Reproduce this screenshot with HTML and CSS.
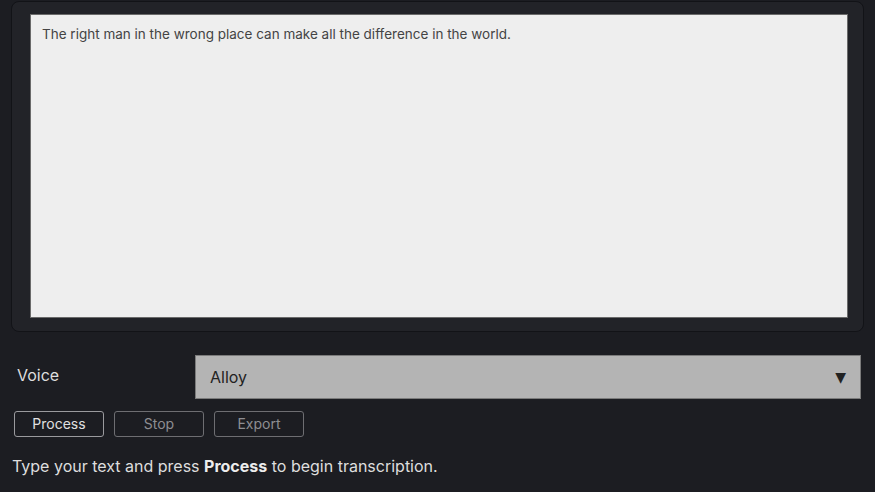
FILE: index.html
```html
<!DOCTYPE html>
<html>
<head>
<meta charset="utf-8">
<link rel="stylesheet" href="styles.css">
</head>
<body>
<div class="panel">
  <div class="textarea">The right man in the wrong place can make all the difference in the world.</div>
</div>
<div class="voice-row">
  <div class="voice-label">Voice</div>
  <div class="select"><span>Alloy</span><span class="arrow">▼</span></div>
</div>
<div class="buttons">
  <div class="btn primary">Process</div>
  <div class="btn">Stop</div>
  <div class="btn">Export</div>
</div>
<div class="status">Type your text and press <b>Process</b> to begin transcription.</div>
</body>
</html>
```
FILE: styles.css
```css
html, body {
  margin: 0;
  padding: 0;
  background: #1c1d22;
  font-family: Inter, "Noto Sans", sans-serif;
  width: 875px;
  height: 492px;
  overflow: hidden;
}
body {
  padding-top: 1px;
  box-sizing: border-box;
}
.panel {
  margin-left: 11px;
  width: 853px;
  height: 331px;
  box-sizing: border-box;
  border: 1px solid #121317;
  border-radius: 8px;
  background: #222328;
  padding: 12px 15px 13px 18px;
}
.textarea {
  height: 100%;
  box-sizing: border-box;
  background: #eeeeee;
  border: 1px solid #6a6a6a;
  color: #444;
  font-size: 13.5px;
  padding: 11px 11px;
  line-height: 16px;
}
.voice-row {
  display: flex;
  align-items: center;
  margin-top: 23px;
  height: 44px;
}
.voice-label {
  width: 178px;
  padding-left: 17px;
  color: #dedede;
  font-size: 16px;
  margin-top: -5px;
}
.select {
  width: 666px;
  height: 44px;
  box-sizing: border-box;
  background: #b4b4b4;
  border: 1px solid #7b7b7b;
  display: flex;
  align-items: center;
  justify-content: space-between;
  padding: 0 14px 0 14px;
  color: #222;
  font-size: 16px;
}
.arrow {
  font-size: 14px;
  color: #222;
  font-family: "DejaVu Sans", sans-serif;
}
.buttons {
  display: flex;
  gap: 10px;
  margin-top: 12px;
  margin-left: 14px;
}
.btn {
  width: 90px;
  height: 26px;
  box-sizing: border-box;
  border: 1px solid #6e6e72;
  border-radius: 3px;
  color: #8e8e92;
  font-size: 14px;
  display: flex;
  align-items: center;
  justify-content: center;
  padding-bottom: 2px;
}
.btn.primary {
  border-color: #9a9a9e;
  color: #e0e0e0;
}
.status {
  margin-top: 19px;
  margin-left: 12px;
  color: #dedede;
  font-size: 16px;
}
.status b { font-weight: 700; color: #ececec; }
```
